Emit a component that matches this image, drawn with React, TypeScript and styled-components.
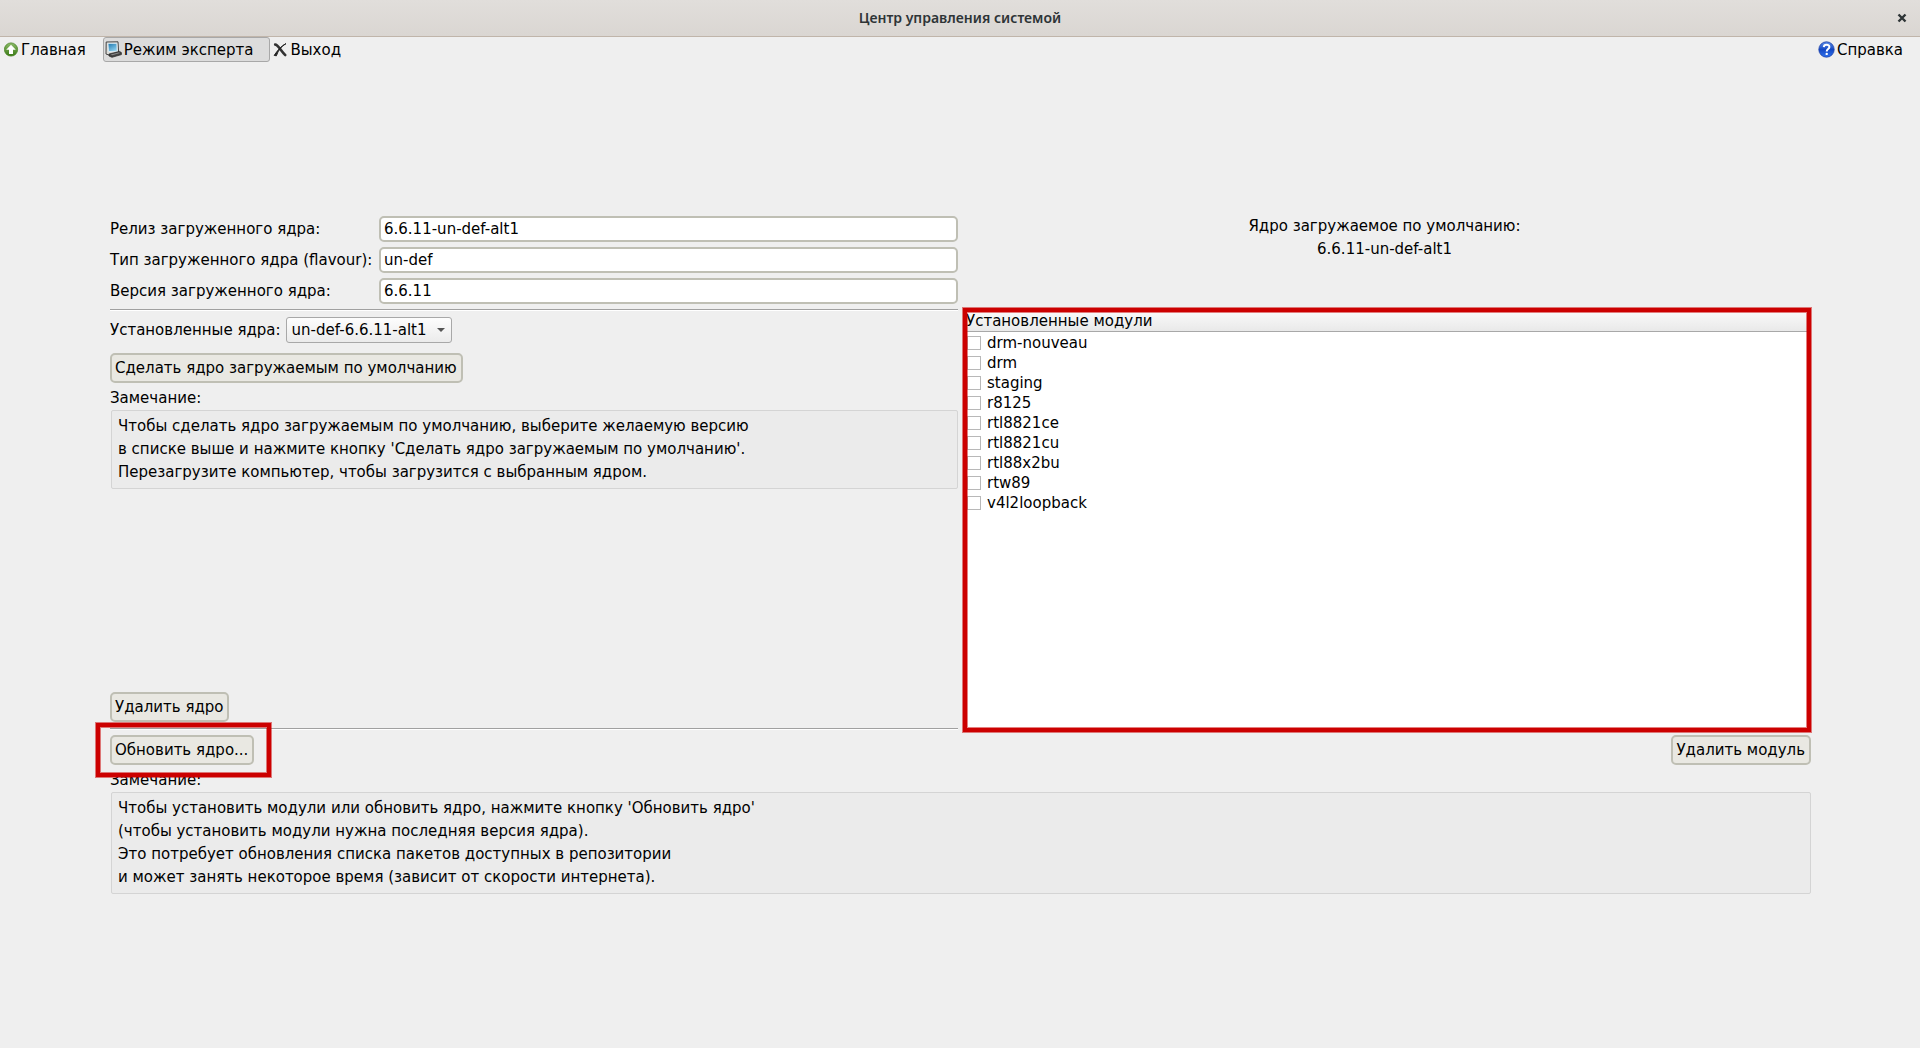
import React from "react";
import styled, { createGlobalStyle, css } from "styled-components";

const GlobalStyle = createGlobalStyle`
  * { box-sizing: border-box; }
  body {
    margin: 0;
    background: #efefef;
    color: #000;
    font: 15px/18px "DejaVu Sans", sans-serif;
  }
  button, input, select { font: inherit; color: inherit; }
`;

const Window = styled.div`
  display: flex;
  flex-direction: column;
  min-height: 100vh;
`;

const TitleBar = styled.header`
  display: grid;
  grid-template-columns: 1fr auto 1fr;
  align-items: center;
  height: 37px;
  padding: 0 12px;
  background: linear-gradient(#e1dedb, #dad6d2);
  border-bottom: 1px solid #c0b5aa;
`;

const Title = styled.h1`
  grid-column: 2;
  margin: 0;
  color: #2e3436;
  font: 600 14px/20px "Noto Sans", sans-serif;
`;

const CloseButton = styled.button`
  display: flex;
  justify-self: end;
  padding: 1px;
  border: 0;
  background: none;
  color: #2e3436;
`;

const Toolbar = styled.nav`
  display: flex;
  height: 25px;
  padding: 0 16px 0 2px;
`;

const ToolButton = styled.button<{ $active?: boolean; $push?: boolean; $wide?: boolean }>`
  display: flex;
  align-items: center;
  gap: 2px;
  padding: 0 1px;
  border: 1px solid transparent;
  border-radius: 3px;
  background: none;
  white-space: nowrap;
  ${(p) => p.$wide && css`padding-right: 16px;`}
  ${(p) => p.$push && css`margin-left: auto; padding-right: 0;`}
  ${(p) => p.$active && css`
    background: #dcdcdc;
    border-color: #a8a8a8;
  `}
`;

const Main = styled.main`
  display: flex;
  flex: 1;
  flex-direction: column;
  justify-content: center;
  padding: 0 109px 0 110px;
`;

const Columns = styled.div`
  display: grid;
  grid-template-columns: 1fr 1fr;
  gap: 5px;
`;

const ReleaseForm = styled.form`
  display: grid;
  grid-template-columns: minmax(264px, auto) 1fr;
  gap: 5px;
  align-items: center;
`;

const TextBox = styled.input`
  width: 100%;
  height: 26px;
  padding: 0 3px;
  border: 2px solid #bfbfb4;
  border-radius: 5px;
  background: #fff;
`;

const DefaultKernel = styled.p`
  margin: -1px 5px 0 0;
  line-height: 23px;
  text-align: center;
`;

const KernelPanel = styled.section`
  display: flex;
  flex-direction: column;
  align-items: flex-start;
`;

const Divider = styled.hr`
  width: 100%;
  height: 2px;
  margin: 0;
  border: 0;
  border-top: 1px solid #a0a0a0;
  border-bottom: 1px solid #fff;
`;

const KernelRow = styled.div`
  display: flex;
  align-items: center;
  gap: 5px;
  margin: 6px 0 10px;
`;

const SelectWrap = styled.div`
  display: grid;
  align-items: center;
  svg {
    grid-area: 1 / 1;
    justify-self: end;
    margin-right: 7px;
    pointer-events: none;
  }
`;

const Select = styled.select`
  grid-area: 1 / 1;
  height: 26px;
  padding: 0 24px 0 5px;
  border: 1px solid #a8a8a8;
  border-radius: 3px;
  background: linear-gradient(#fdfdfd, #ebebeb);
  appearance: none;
`;

const Button = styled.button`
  height: 30px;
  padding: 0 4px 0 3px;
  border: 2px solid #bfbfb4;
  border-radius: 5px;
  background: #e9e8e2;
  white-space: nowrap;
`;

const NoteLabel = styled.div`
  margin: 7px 0 3px;
  line-height: 17px;
`;

const Note = styled.p`
  align-self: stretch;
  margin: 0 0 0 1px;
  padding: 4px 6px;
  border: 1px solid #d4d4d4;
  border-radius: 2px;
  background: #ebebeb;
  line-height: 23px;
`;

const Spacer = styled.div`
  flex: 1;
`;

const ButtonHolder = styled.div<{ $below?: number }>`
  position: relative;
  margin-bottom: ${(p) => p.$below ?? 0}px;
`;

const Modules = styled.section`
  position: relative;
  min-height: 421px;
  padding: 2px 3px;
  background: #fff;
`;

const ModuleTable = styled.table`
  width: 100%;
  border-collapse: collapse;
  th {
    height: 20px;
    padding: 0;
    border-bottom: 1px solid #a8a8a8;
    background: linear-gradient(#fafafa, #e9e9e9);
    font-weight: normal;
    text-align: left;
  }
  td {
    height: 20px;
    padding: 0 1px;
  }
  tbody::before {
    content: "";
    display: block;
    height: 1px;
  }
`;

const ModuleLabel = styled.label`
  display: flex;
  align-items: center;
  gap: 6px;
`;

const CheckBox = styled.input`
  width: 14px;
  height: 14px;
  margin: 0;
  border: 1px solid #b8b8b8;
  background: #fff;
  appearance: none;
`;

const Highlight = styled.div<{ $inset: string }>`
  position: absolute;
  inset: ${(p) => p.$inset};
  border: 4px solid #cc0000;
  box-shadow: 0 0 0 1px rgba(204, 0, 0, 0.5), inset 0 0 0 1px rgba(204, 0, 0, 0.5);
  pointer-events: none;
`;

const Actions = styled.div`
  display: flex;
  justify-content: space-between;
  margin-top: 5px;
`;

const HomeIcon = () => (
  <svg width="15" height="16" viewBox="0 0 15 16" aria-hidden="true">
    <defs>
      <linearGradient id="home" x1="0" y1="0" x2="0" y2="1">
        <stop offset="0" stopColor="#8dbb6a" />
        <stop offset="1" stopColor="#3a7a14" />
      </linearGradient>
    </defs>
    <circle cx="7" cy="7.5" r="6.6" fill="url(#home)" stroke="#4a8526" strokeWidth=".8" />
    <path d="M7 2.8 11.8 7.8H9V12H5V7.8H2.2z" fill="#fff" />
  </svg>
);

const ExpertIcon = () => (
  <svg width="17" height="17" viewBox="0 0 17 17" aria-hidden="true">
    <defs>
      <linearGradient id="screen" x1="0" y1="0" x2=".6" y2="1">
        <stop offset="0" stopColor="#1f78ae" />
        <stop offset="1" stopColor="#8ed0ee" />
      </linearGradient>
    </defs>
    <path d="M1.2 1 13 .8 13.6 11 5 14.4 1 13z" fill="#dcdcd8" stroke="#444" />
    <path d="M3 2.4H11.8L12.2 10.2 3.6 10.6z" fill="url(#screen)" stroke="#e8f4fa" strokeWidth=".7" />
    <path d="M4 13 14.5 10.4 16.4 11.6V13.6L7 16.3 4 15z" fill="#444" stroke="#222" strokeWidth=".7" />
    <path d="M5.6 13.5 13.6 11.5 15.2 12.1 7.3 14.3z" fill="#8c8c8c" />
  </svg>
);

const ExitIcon = () => (
  <svg width="16" height="14" viewBox="0 0 16 14" aria-hidden="true">
    <path d="M3.2 1.6C4.6 1.4 6.4 3.6 8 5.8 9.8 8.2 11.4 10.6 13.2 12" fill="none" stroke="#333" strokeWidth="2.6" strokeLinecap="round" />
    <path d="M14 .6C9.8 2.8 6 7.4 4.4 12.8L2.2 12.4C5.2 8 9 3 14 .6z" fill="#222" stroke="#222" strokeWidth="1" strokeLinejoin="round" />
  </svg>
);

const HelpIcon = () => (
  <svg width="17" height="17" viewBox="0 0 17 17" aria-hidden="true">
    <defs>
      <linearGradient id="help" x1="0" y1="0" x2="0" y2="1">
        <stop offset="0" stopColor="#5f8fe8" />
        <stop offset=".5" stopColor="#1448c4" />
        <stop offset="1" stopColor="#2f72ee" />
      </linearGradient>
    </defs>
    <circle cx="8.5" cy="8.5" r="7.7" fill="url(#help)" stroke="#1a3fa8" strokeWidth=".8" />
    <path d="M5.8 6.1C5.9 2.9 11.4 2.9 11.4 6 11.4 8.1 8.7 8 8.7 10.4" fill="none" stroke="#fff" strokeWidth="2" />
    <circle cx="8.7" cy="12.9" r="1.2" fill="#fff" />
  </svg>
);

const MODULES = [
  "drm-nouveau",
  "drm",
  "staging",
  "r8125",
  "rtl8821ce",
  "rtl8821cu",
  "rtl88x2bu",
  "rtw89",
  "v4l2loopback",
];

const FIELDS = [
  { id: "release", label: "Релиз загруженного ядра:", value: "6.6.11-un-def-alt1" },
  { id: "flavour", label: "Тип загруженного ядра (flavour):", value: "un-def" },
  { id: "version", label: "Версия загруженного ядра:", value: "6.6.11" },
];

export default function App() {
  return (
    <Window>
      <GlobalStyle />
      <TitleBar>
        <Title>Центр управления системой</Title>
        <CloseButton aria-label="Закрыть">
          <svg width="10" height="10" viewBox="0 0 10 10" aria-hidden="true">
            <path d="M1.5 1.5 8.5 8.5M8.5 1.5 1.5 8.5" stroke="currentColor" strokeWidth="2.4" />
          </svg>
        </CloseButton>
      </TitleBar>
      <Toolbar>
        <ToolButton $wide><HomeIcon />Главная</ToolButton>
        <ToolButton $active $wide><ExpertIcon />Режим эксперта</ToolButton>
        <ToolButton><ExitIcon />Выход</ToolButton>
        <ToolButton $push><HelpIcon />Справка</ToolButton>
      </Toolbar>
      <Main>
        <Columns>
          <ReleaseForm>
            {FIELDS.map((f) => (
              <React.Fragment key={f.id}>
                <label htmlFor={f.id}>{f.label}</label>
                <TextBox id={f.id} defaultValue={f.value} />
              </React.Fragment>
            ))}
          </ReleaseForm>
          <DefaultKernel>
            Ядро загружаемое по умолчанию:
            <br />
            6.6.11-un-def-alt1
          </DefaultKernel>
          <KernelPanel>
            <Divider />
            <KernelRow>
              <label htmlFor="kernel">Установленные ядра:</label>
              <SelectWrap>
                <Select id="kernel">
                  <option>un-def-6.6.11-alt1</option>
                </Select>
                <svg width="8" height="4" viewBox="0 0 8 4" aria-hidden="true">
                  <path d="M0 0H8L4 4z" fill="#555" />
                </svg>
              </SelectWrap>
            </KernelRow>
            <Button>Сделать ядро загружаемым по умолчанию</Button>
            <NoteLabel>Замечание:</NoteLabel>
            <Note>
              Чтобы сделать ядро загружаемым по умолчанию, выберите желаемую версию
              <br />
              в списке выше и нажмите кнопку 'Сделать ядро загружаемым по умолчанию'.
              <br />
              Перезагрузите компьютер, чтобы загрузится с выбранным ядром.
            </Note>
            <Spacer />
            <ButtonHolder $below={6}>
              <Button>Удалить ядро</Button>
            </ButtonHolder>
            <Divider />
          </KernelPanel>
          <Modules>
            <ModuleTable>
              <thead>
                <tr><th>Установленные модули</th></tr>
              </thead>
              <tbody>
                {MODULES.map((name) => (
                  <tr key={name}>
                    <td>
                      <ModuleLabel>
                        <CheckBox type="checkbox" />
                        {name}
                      </ModuleLabel>
                    </td>
                  </tr>
                ))}
              </tbody>
            </ModuleTable>
            <Highlight $inset="-1px 0 -2px 0" />
          </Modules>
        </Columns>
        <Actions>
          <ButtonHolder>
            <Button>Обновить ядро...</Button>
            <Highlight $inset="-12px -17px -12px -14px" />
          </ButtonHolder>
          <Button>Удалить модуль</Button>
        </Actions>
        <NoteLabel>Замечание:</NoteLabel>
        <Note>
          Чтобы установить модули или обновить ядро, нажмите кнопку 'Обновить ядро'
          <br />
          (чтобы установить модули нужна последняя версия ядра).
          <br />
          Это потребует обновления списка пакетов доступных в репозитории
          <br />
          и может занять некоторое время (зависит от скорости интернета).
        </Note>
      </Main>
    </Window>
  );
}
